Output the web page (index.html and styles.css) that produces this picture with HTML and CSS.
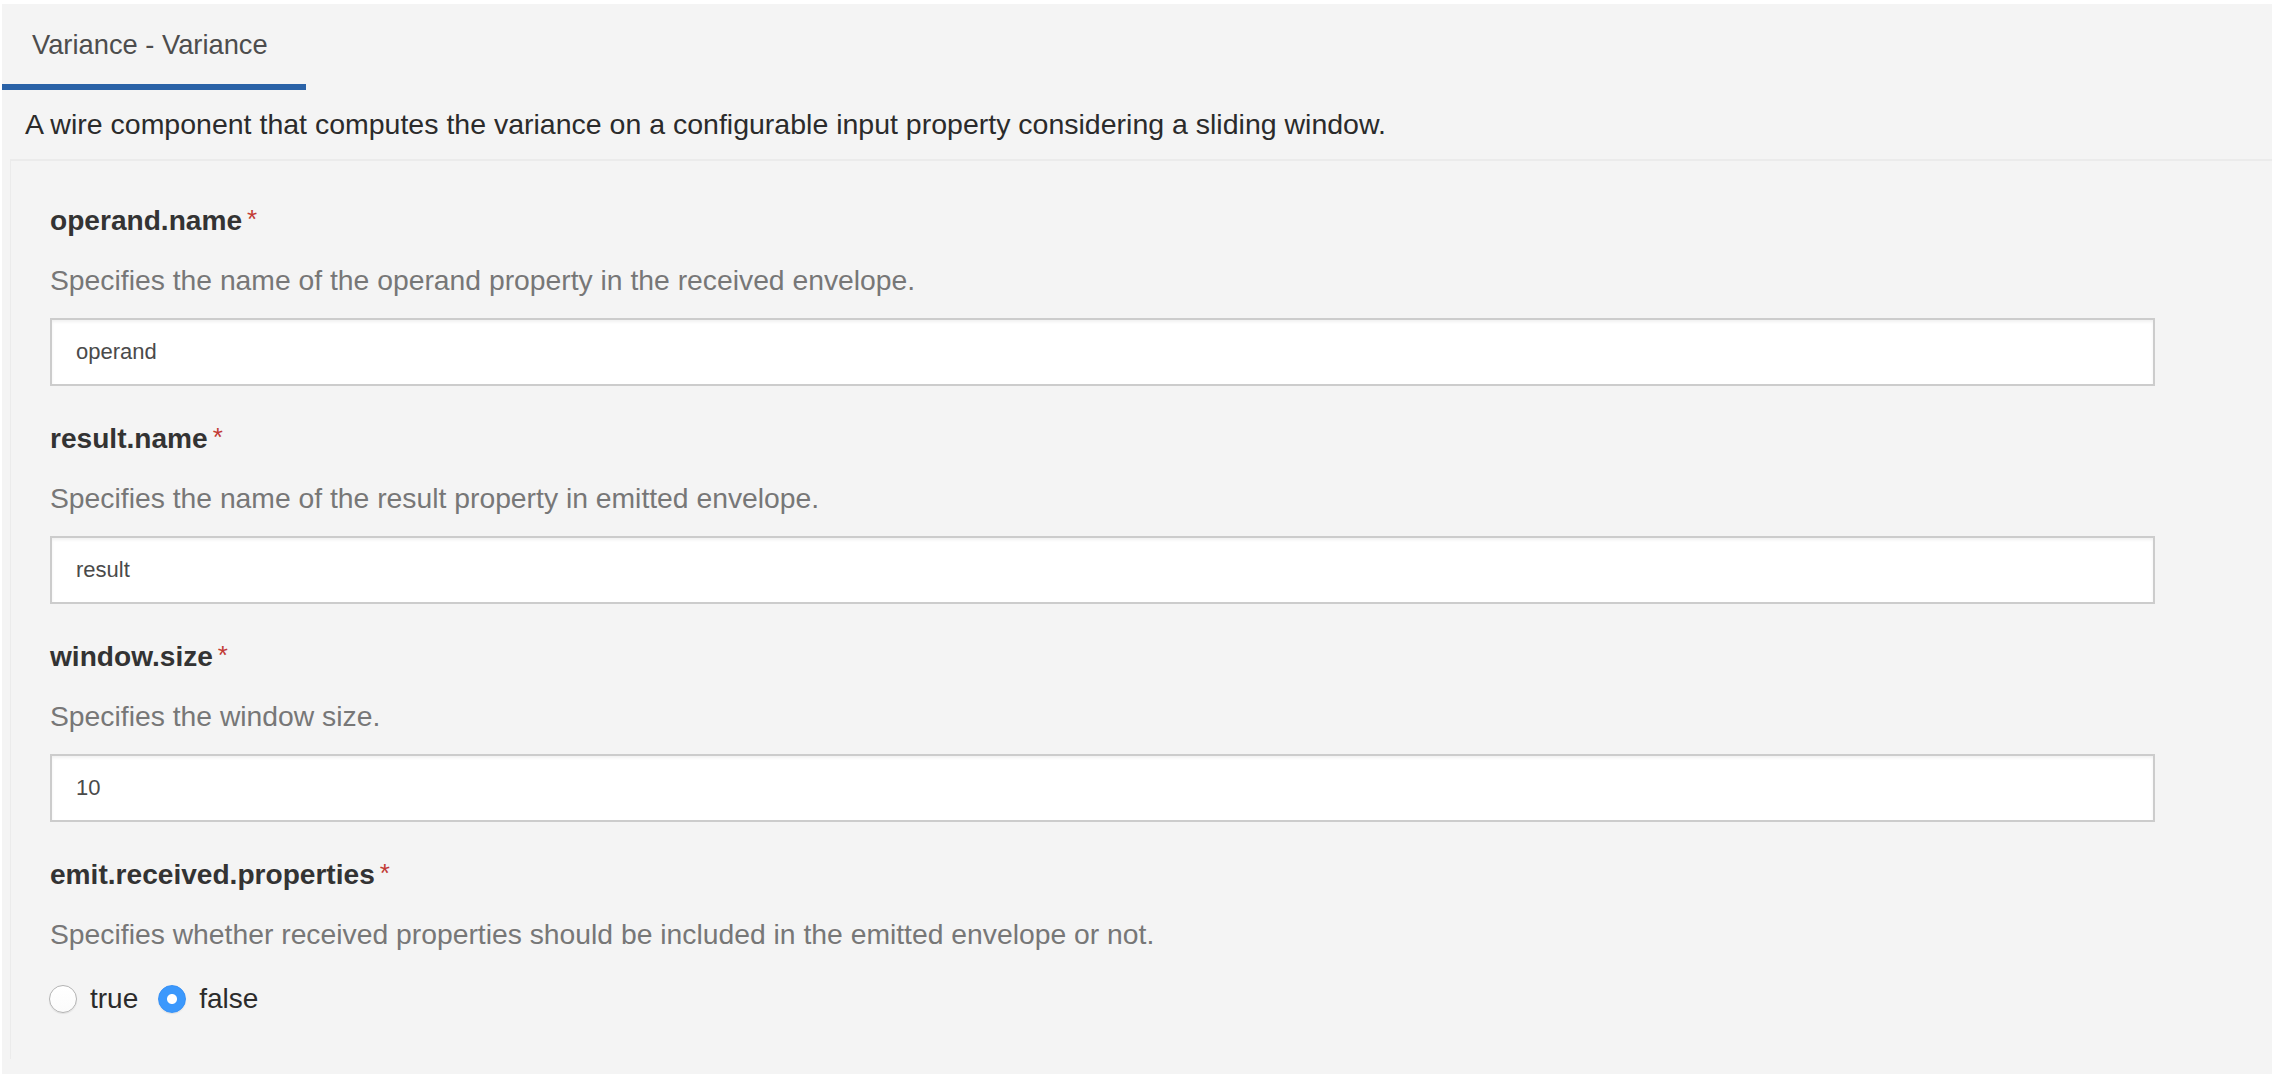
FILE: index.html
```html
<!DOCTYPE html>
<html lang="en">
<head>
<meta charset="utf-8">
<title>Variance - Variance</title>
<link rel="stylesheet" href="styles.css">
</head>
<body>
<div class="frame">
  <div class="tabs">
    <div class="tab active">Variance - Variance</div>
  </div>
  <p class="desc">A wire component that computes the variance on a configurable input property considering a sliding window.</p>
  <div class="panel">
    <div class="field">
      <div class="label">operand.name<span class="req">*</span></div>
      <div class="help">Specifies the name of the operand property in the received envelope.</div>
      <input class="input" type="text" value="operand">
    </div>
    <div class="field">
      <div class="label">result.name<span class="req">*</span></div>
      <div class="help">Specifies the name of the result property in emitted envelope.</div>
      <input class="input" type="text" value="result">
    </div>
    <div class="field">
      <div class="label">window.size<span class="req">*</span></div>
      <div class="help">Specifies the window size.</div>
      <input class="input" type="text" value="10">
    </div>
    <div class="field">
      <div class="label">emit.received.properties<span class="req">*</span></div>
      <div class="help">Specifies whether received properties should be included in the emitted envelope or not.</div>
      <div class="radios">
        <label class="opt"><input class="radio" type="radio" name="emit"><span>true</span></label>
        <label class="opt"><input class="radio" type="radio" name="emit" checked><span>false</span></label>
      </div>
    </div>
  </div>
</div>
</body>
</html>
```
FILE: styles.css
```css
html, body {
  margin: 0;
  padding: 0;
  background: #ffffff;
  height: 100%;
}

body {
  font-family: "Liberation Sans", Arial, Helvetica, sans-serif;
  color: #333333;
  overflow: hidden;
}

.frame {
  margin: 4px 0 0 2px;
  background: #f4f4f4;
  min-height: calc(100vh - 4px);
  box-sizing: border-box;
}

.tabs {
  display: flex;
}

.tab {
  width: 304px;
  box-sizing: border-box;
  padding: 21px 0 19px 30px;
  font-size: 27.3px;
  line-height: 40px;
  color: #4d4d4d;
  white-space: nowrap;
}

.tab.active {
  border-bottom: 6px solid #2a62a7;
}

.desc {
  margin: 14px 0 0 0;
  padding: 0 0 15px 23px;
  font-size: 28.5px;
  line-height: 40px;
  color: #2b2b2b;
}

.panel {
  margin-left: 8px;
  border-top: 2px solid #ebebeb;
  border-left: 1px solid #ebebeb;
  padding: 38px 0 40px 39px;
}

.field + .field {
  margin-top: 31px;
}

.label {
  font-weight: bold;
  font-size: 28.1px;
  line-height: 40px;
  color: #333333;
  white-space: nowrap;
}

.req {
  font-weight: normal;
  color: #c23b35;
  margin-left: 5px;
  font-size: 26px;
  vertical-align: 2px;
}

.help {
  margin-top: 19px;
  font-size: 28.3px;
  line-height: 40px;
  color: #777777;
  white-space: nowrap;
}

.input {
  display: block;
  margin: 18px 0 0 0;
  width: 2105px;
  height: 68px;
  box-sizing: border-box;
  border: 2px solid #cccccc;
  border-radius: 0;
  background: #ffffff;
  box-shadow: inset 0 2px 3px rgba(0, 0, 0, 0.06);
  padding: 0 0 0 24px;
  font-family: "Liberation Sans", Arial, Helvetica, sans-serif;
  font-size: 22px;
  color: #4a4a4a;
  outline: none;
}

.radios {
  margin-top: 25px;
  display: flex;
  align-items: center;
  gap: 20px;
  margin-left: -1px;
}

.opt {
  display: flex;
  align-items: center;
  gap: 13px;
  font-size: 28px;
  line-height: 40px;
  color: #2b2b2b;
}

.radio {
  -webkit-appearance: none;
  appearance: none;
  margin: 0;
  width: 28px;
  height: 28px;
  border-radius: 50%;
  box-sizing: border-box;
  border: 1px solid #b3b3b3;
  background: linear-gradient(#ffffff, #fbfbfb);
  box-shadow: 0 1px 1px rgba(0, 0, 0, 0.08);
}

.radio:checked {
  border: 1px solid #3690f5;
  background: radial-gradient(circle, #ffffff 0, #ffffff 4.5px, #3b98fc 5.5px, #3b98fc 100%);
}
```
